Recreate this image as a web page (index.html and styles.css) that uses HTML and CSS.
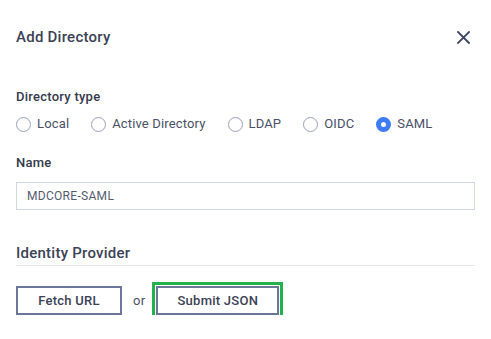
FILE: index.html
```html
<!DOCTYPE html>
<html lang="en">
<head>
  <meta charset="UTF-8" />
  <meta name="viewport" content="width=device-width, initial-scale=1.0"/>
  <title>Add Directory</title>
  <link rel="stylesheet" href="styles.css">
</head>
<body>
  <div class="dialog">
    <div class="dialog-header">
      <h1>Add Directory</h1>
      <svg class="close-icon" width="13" height="13" viewBox="0 0 13 13">
        <path d="M1 1 L12 12 M12 1 L1 12" stroke="#3b4563" stroke-width="1.8" stroke-linecap="square"/>
      </svg>
    </div>

    <div class="field-label first">Directory type</div>
    <div class="radio-row">
      <label class="radio"><span class="dot"></span>Local</label>
      <label class="radio"><span class="dot"></span>Active Directory</label>
      <label class="radio"><span class="dot"></span>LDAP</label>
      <label class="radio"><span class="dot"></span>OIDC</label>
      <label class="radio"><span class="dot checked"></span>SAML</label>
    </div>

    <div class="field-label name-label">Name</div>
    <input type="text" class="text-input" value="MDCORE-SAML" />

    <h2 class="section-title">Identity Provider</h2>

    <div class="button-row">
      <button class="outline-btn fetch">Fetch URL</button>
      <span class="or">or</span>
      <button class="outline-btn focused">Submit JSON</button>
    </div>
  </div>
</body>
</html>
```

FILE: styles.css
```css
body {
  font-family: Roboto, "Noto Sans", sans-serif;
  background-color: #fff;
  color: #3b4256;
  letter-spacing: 0.25px;
  margin: 0;
}

.dialog {
  padding: 0 16px;
}

.dialog-header {
  height: 74px;
  display: flex;
  align-items: center;
  justify-content: space-between;
  padding-right: 5px;
}

h1 {
  margin: 0;
  font-size: 15px;
  font-weight: 500;
  color: #3b4256;
}

.close-icon {
  display: block;
}

.field-label {
  font-size: 13px;
  font-weight: 500;
  line-height: 18px;
  color: #343a4c;
}

.field-label.first {
  margin-top: 14px;
}

.radio-row {
  display: flex;
  gap: 22px;
  margin-top: 9px;
  line-height: 18px;
}

.radio {
  display: flex;
  align-items: center;
  gap: 6px;
  font-size: 13px;
  letter-spacing: 0.15px;
  color: #4a5068;
}

.dot {
  width: 15px;
  height: 15px;
  box-sizing: border-box;
  border: 1px solid #98a0bb;
  border-radius: 50%;
}

.dot.checked {
  border: 5px solid #3d7bf7;
}

.name-label {
  margin-top: 21px;
}

.text-input {
  display: block;
  width: 100%;
  box-sizing: border-box;
  height: 28px;
  margin-top: 10px;
  padding: 0 10px;
  border: 1px solid #d3d7e3;
  font-family: Roboto, "Noto Sans", sans-serif;
  font-size: 12px;
  letter-spacing: 0.3px;
  color: #555c70;
  outline: none;
}

.section-title {
  margin: 33px 0 0;
  font-size: 15px;
  font-weight: 500;
  line-height: 20px;
  padding-bottom: 2px;
  border-bottom: 1px solid #e6e8ee;
  color: #3b4256;
}

.button-row {
  display: flex;
  align-items: center;
  margin-top: 20px;
}

.outline-btn {
  height: 29px;
  box-sizing: border-box;
  border: 2px solid #6b7797;
  background: #fff;
  font-family: Roboto, "Noto Sans", sans-serif;
  font-size: 13px;
  font-weight: 500;
  letter-spacing: 0.25px;
  color: #3b4256;
  cursor: pointer;
}

.fetch {
  width: 106px;
}

.or {
  font-size: 13px;
  color: #4a5068;
  margin: 0 11px;
}

.focused {
  width: 123px;
  outline: 3px solid #22b14c;
  outline-offset: 1px;
}
```
